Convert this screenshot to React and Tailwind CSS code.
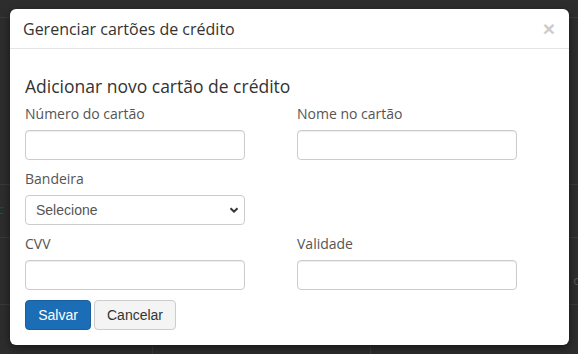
import React from "react";

const Label = ({ children }) => (
  <div className="h-[20px] leading-[20px] text-[14px] text-[#555] mb-[6px]">{children}</div>
);

const Input = () => (
  <div className="w-[220px] h-[30px] rounded-[4px] border border-[#ccc] bg-white shadow-[inset_0_1px_1px_rgba(0,0,0,0.075)]" />
);

export default function App() {
  return (
    <div className="relative w-[578px] h-[354px] overflow-hidden bg-[#2d2d2d] font-['Open_Sans',sans-serif]">
      {/* faint background page beneath the overlay */}
      <div className="flex flex-col">
        <div className="h-[18px] border-b border-[#3a3a3a]" />
        <div className="h-[167px] border-b border-[#3a3a3a]" />
        <div className="h-[53px] border-b border-[#3a3a3a] flex items-center justify-between pb-[2px]">
          <span className="text-[13px] text-[#1a4a6a] ml-[-2px]">c</span>
        </div>
        <div className="h-[67px] border-b border-[#3a3a3a] flex items-end justify-end pb-[14px]">
          <span className="text-[13px] text-[#555] mr-[-3px]">o</span>
        </div>
        <div className="h-[41px]" />
        <div className="flex h-[20px]">
          <div className="w-[153px] border-r border-[#3a3a3a]" />
          <div className="w-[218px] border-r border-[#3a3a3a]" />
        </div>
      </div>

      <div className="absolute left-[10px] top-[9px] w-[559px] h-[336px] bg-white rounded-[6px] shadow-[0_3px_9px_rgba(0,0,0,0.5)]">
        <div className="h-[40px] flex items-center justify-between pl-[13px] pr-[14px] border-b border-[#e5e5e5]">
          <div className="text-[16px] text-[#333]">Gerenciar cartões de crédito</div>
          <div className="text-[21px] font-bold text-[#ccc] leading-none font-['Liberation_Sans',sans-serif]">×</div>
        </div>
        <div className="pl-[15px] pt-[25px]">
          <div className="h-[24px] leading-[24px] text-[17.5px] text-[#333] mb-[6px]">
            Adicionar novo cartão de crédito
          </div>
          <div className="flex gap-[52px] mb-[9px]">
            <div>
              <Label>Número do cartão</Label>
              <Input />
            </div>
            <div>
              <Label>Nome no cartão</Label>
              <Input />
            </div>
          </div>
          <div className="mb-[9px]">
            <Label>Bandeira</Label>
            <div className="w-[220px] h-[30px] rounded-[4px] border border-[#ccc] bg-white flex items-center justify-between pl-[10px] pr-[5px] font-['Liberation_Sans',sans-serif] text-[14px] text-[#555]">
              <span>Selecione</span>
              <svg width="10" height="10" viewBox="0 0 10 10">
                <path d="M1.5 3.2 L5 6.7 L8.5 3.2" fill="none" stroke="#333" strokeWidth="2" />
              </svg>
            </div>
          </div>
          <div className="flex gap-[52px] mb-[10px]">
            <div>
              <Label>CVV</Label>
              <Input />
            </div>
            <div>
              <Label>Validade</Label>
              <Input />
            </div>
          </div>
          <div className="flex gap-[3px] font-['Liberation_Sans',sans-serif] text-[14px]">
            <div className="w-[66px] h-[30px] rounded-[4px] bg-[#1b6db5] border border-[#1a5f9e] text-white flex items-center justify-center">
              Salvar
            </div>
            <div className="w-[82px] h-[30px] rounded-[4px] bg-[#f4f4f4] border border-[#ccc] text-[#333] flex items-center justify-center">
              Cancelar
            </div>
          </div>
        </div>
      </div>
    </div>
  );
}
